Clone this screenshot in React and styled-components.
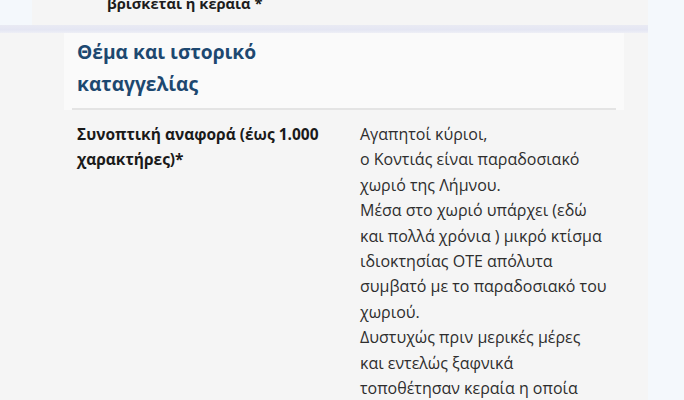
import styled, { createGlobalStyle } from "styled-components";

const Global = createGlobalStyle`
    html, body {
        margin: 0;
        padding: 0;
        background: #f4f8fc;
        font-family: "Open Sans", Roboto, "Liberation Sans", sans-serif;
        overflow: hidden;
    }
`;

const Page = styled.div`
    width: 684px;
    height: 400px;
    overflow: hidden;
    display: flex;
    flex-direction: column;
`;

const TopCard = styled.div`
    flex-shrink: 0;
    margin-left: 32px;
    width: 616px;
    height: 25px;
    background: #f5f5f5;
    overflow: hidden;
    display: flex;
    align-items: flex-end;
`;

const TopLabel = styled.div`
    padding-left: 75px;
    font-size: 14.7px;
    font-weight: 700;
    line-height: 25px;
    color: #1c1c1c;
    margin-bottom: 9px;
`;

const Band = styled.div`
    flex-shrink: 0;
    width: 648px;
    height: 8px;
    background: linear-gradient(#e9eaf3, #e4e6f3 60%, #eeeff6);
`;

const Section = styled.section`
    width: 648px;
    flex: 1 0 auto;
    background: #f5f5f5;
    display: flex;
    flex-direction: column;
`;

const HeadBox = styled.div`
    flex-shrink: 0;
    margin-left: 64px;
    width: 560px;
    background: #fafafa;
    padding: 3px 8px 0;
    box-sizing: border-box;
`;

const Heading = styled.h2`
    margin: 0;
    padding: 0 5px 8px;
    font-size: 19.2px;
    font-weight: 700;
    line-height: 32px;
    color: #1d4870;
    border-bottom: 2px solid #e4e4e4;
`;

const Row = styled.div`
    display: grid;
    grid-template-columns: 283px 1fr;
    padding: 12px 0 0 77px;
`;

const Label = styled.div`
    font-size: 15.5px;
    font-weight: 700;
    line-height: 25px;
    color: #1a1a1a;
`;

const Value = styled.div`
    font-size: 16px;
    line-height: 25.4px;
    color: #2e2e2e;
    white-space: nowrap;
`;

const lines = [
    "Αγαπητοί κύριοι,",
    "ο Κοντιάς είναι παραδοσιακό",
    "χωριό της Λήμνου.",
    "Μέσα στο χωριό υπάρχει (εδώ",
    "και πολλά χρόνια ) μικρό κτίσμα",
    "ιδιοκτησίας ΟΤΕ απόλυτα",
    "συμβατό με το παραδοσιακό του",
    "χωριού.",
    "Δυστυχώς πριν μερικές μέρες",
    "και εντελώς ξαφνικά",
    "τοποθέτησαν κεραία η οποία",
];

export default function App() {
    return (
        <Page>
            <Global />
            <TopCard>
                <TopLabel>βρίσκεται η κεραία *</TopLabel>
            </TopCard>
            <Band />
            <Section>
                <HeadBox>
                    <Heading>Θέμα και ιστορικό<br />καταγγελίας</Heading>
                </HeadBox>
                <Row>
                    <Label>Συνοπτική αναφορά (έως 1.000<br />χαρακτήρες)*</Label>
                    <Value>
                        {lines.map((l, i) => <div key={i}>{l}</div>)}
                    </Value>
                </Row>
            </Section>
        </Page>
    );
}
